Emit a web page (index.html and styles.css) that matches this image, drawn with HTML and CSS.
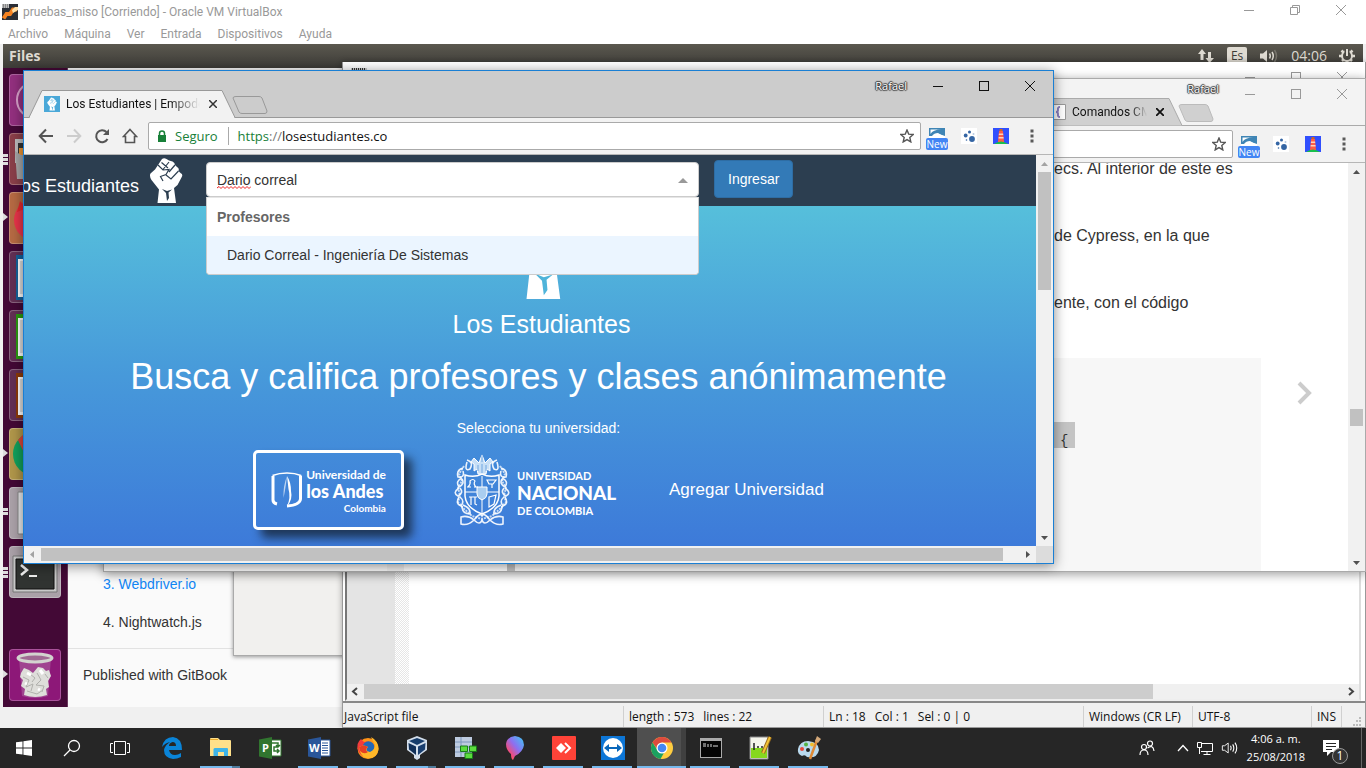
FILE: index.html
```html
<!DOCTYPE html>
<html lang="es">
<head>
<meta charset="utf-8">
<title>pruebas_miso [Corriendo] - Oracle VM VirtualBox</title>
<link rel="stylesheet" href="styles.css">
</head>
<body>
<svg class="defs" aria-hidden="true">
  <symbol id="min" viewBox="0 0 12 12"><path d="M1 6.500H11" stroke="currentColor" fill="none"/></symbol>
  <symbol id="max" viewBox="0 0 12 12"><rect x="1.500" y="1.500" width="9" height="9" stroke="currentColor" fill="none"/></symbol>
  <symbol id="restore" viewBox="0 0 12 12"><path d="M1.500 3.500H8.500V10.500H1.500ZM3.500 3V1.500H10.500V8.500H9" stroke="currentColor" fill="none"/></symbol>
  <symbol id="close" viewBox="0 0 12 12"><path d="M1 1L11 11M11 1L1 11" stroke="currentColor" fill="none"/></symbol>
  <symbol id="back" viewBox="0 0 16 16"><path d="M15 8H2M8 1.500L1.700 8L8 14.500" stroke="currentColor" stroke-width="2" fill="none"/></symbol>
  <symbol id="reload" viewBox="0 0 16 16"><path d="M13.500 11A6 6 0 1 1 12.500 4" stroke="currentColor" stroke-width="2" fill="none"/><path d="M15 1V7H9Z" fill="currentColor"/></symbol>
  <symbol id="home" viewBox="0 0 16 16"><path d="M8 1.500L14.500 8.500H12.500V14.500H3.500V8.500H1.500Z" stroke="currentColor" stroke-width="1.600" fill="none"/></symbol>
  <symbol id="star" viewBox="0 0 14 14"><path d="M7 1L8.700 5.100L13.200 5.500L9.800 8.500L10.800 12.900L7 10.600L3.200 12.900L4.200 8.500L.8 5.500L5.300 5.100Z" stroke="#555" stroke-width="1.400" fill="none"/></symbol>
  <symbol id="dots" viewBox="0 0 4 14"><path d="M.5 .5h3v3h-3zM.5 5.500h3v3h-3zM.5 10.500h3v3h-3z" fill="#5a5a5a"/></symbol>
  <symbol id="ext-draw" viewBox="0 0 16 16"><rect width="16" height="16" fill="#fff"/><path d="M0 0H16V8L13 7Q9 5 5 8H0ZM1.500 1.500V6Q4 1 14 1.500Z" fill="#3f85b5" fill-rule="evenodd"/><path d="M3 8Q5 5 9 5L14 8Z" fill="#fff"/></symbol>
  <symbol id="ext-dots" viewBox="0 0 16 16"><rect width="16" height="16" fill="#fff"/><g fill="#3465a4"><circle cx="8.500" cy="4" r="1.500"/><circle cx="4.700" cy="7.500" r="1.900"/><circle cx="11" cy="11" r="2.900"/><circle cx="5.500" cy="12" r=".8"/></g><circle cx="12.500" cy="6" r="1" fill="#b8cbe2"/></symbol>
  <symbol id="ext-tower" viewBox="0 0 16 16"><rect width="16" height="16" fill="#304ffe"/><path d="M6 3H10L11 14H5Z" fill="#ff5c45"/><path d="M6 5.500H10L10.300 7H5.800ZM5.700 9H10.500L10.700 10.500H5.500Z" fill="#ffd2b8"/><path d="M6.500 1H9.500V3H6.500Z" fill="#c62"/><path d="M1 16Q8 11 15 16Z" fill="#19c04b"/></symbol>
  <symbol id="up" viewBox="0 0 17 17"><path d="M5 11H12L8.500 7Z" fill="currentColor"/></symbol>
  <symbol id="down" viewBox="0 0 17 17"><path d="M5 7H12L8.500 11Z" fill="currentColor"/></symbol>
  <symbol id="left" viewBox="0 0 17 17"><path d="M10 5V12L6 8.500Z" fill="currentColor"/></symbol>
  <symbol id="right" viewBox="0 0 17 17"><path d="M7 5V12L11 8.500Z" fill="currentColor"/></symbol>
  <symbol id="fist" viewBox="0 0 34 45">
    <path d="M8.500 45L10 31.500L2.500 22Q0 18 1.500 15.500L6 11.500L9 7L13 1Q15-.5 17.500 1L20 2.500L23.500 3.500Q26 4.500 26 7L28 9Q30.500 10 29.500 13L31.500 15Q34.500 16.500 32.500 19.500L28.500 27L25 30L27 45Z" fill="#fff"/>
    <path d="M12.500 4.500L19 10M20 4L14 11.500M9 7L14 12L20 11.500L17 16.500L11.500 18.500L14 23M26 7L20 14M29.500 13L22 21L17 17" fill="none" stroke="var(--ink)" stroke-width="1.200"/>
    <path d="M13 31L18 33L23 31.500L19.500 34.500L20 40L18 43L17 35Z" fill="var(--ink)"/>
  </symbol>
  <symbol id="speaker" viewBox="0 0 20 14"><path d="M1.500 4.500H4L8 1.500V12.500L4 9.500H1.500Z" fill="none" stroke="currentColor"/><path d="M10.500 4.500Q12 7 10.500 9.500M13 3Q15.500 7 13 11M15.500 1Q19.500 7 15.500 13" stroke="currentColor" fill="none" stroke-width="1.200"/></symbol>
  <symbol id="doc" viewBox="0 0 52 52"><path d="M7 4H46V49H7Z" fill="currentColor"/><path d="M9 8H44V46H9Z" fill="#fff"/><path d="M11 10H42V43H11Z" fill="#ddd"/></symbol>
</svg>

<main class="desktop">
  <section class="vm" aria-label="Máquina virtual">
    <header class="vm-title">
      <svg class="i16" viewBox="0 0 16 16"><rect width="16" height="16" fill="#2b2e35"/><path d="M1.500 14.500L4.500 10H8L11 5.500H15" fill="none" stroke="#f58220" stroke-width="4"/><path d="M10 6L13 3H16V6L11 9Z" fill="#ffe0a8"/><path d="M0 0H7V4H0Z" fill="#bbb"/><path d="M1 1H6M1 3H6" stroke="#555" stroke-dasharray="1 1"/></svg>
      <span>pruebas_miso [Corriendo] - Oracle VM VirtualBox</span>
      <div class="controls pale">
        <button aria-label="Minimizar VM"><svg><use href="#min"/></svg></button><button aria-label="Restaurar VM"><svg><use href="#restore"/></svg></button><button aria-label="Cerrar VM"><svg><use href="#close"/></svg></button>
      </div>
    </header>
    <nav class="vm-menu"><button>Archivo</button><button>Máquina</button><button>Ver</button><button>Entrada</button><button>Dispositivos</button><button>Ayuda</button></nav>
    <div class="guest">
      <div class="panel">
        <b>Files</b>
        <div class="indicators">
          <svg width="18" height="16" viewBox="0 0 18 16"><path d="M5 1L9 6H6.500V12H3.500V6H1ZM12.500 15L8.500 10H11V4H14V10H17Z" fill="#dfdbd2"/></svg>
          <span class="lang">Es</span>
          <svg width="20" height="14" viewBox="0 0 20 14"><path d="M1 4.500H4L8 1V13L4 9.500H1Z" fill="#dfdbd2"/><path d="M10.500 4.500Q12 7 10.500 9.500M13 3Q15.500 7 13 11" stroke="#dfdbd2" fill="none" stroke-width="1.500"/><path d="M15.500 1Q19.500 7 15.500 13" stroke="#77746b" fill="none" stroke-width="1.500"/></svg>
          <time>04:06</time>
          <svg width="16" height="16" viewBox="0 0 16 16"><circle cx="8" cy="8" r="5" fill="none" stroke="#dfdbd2" stroke-width="2"/><path d="M0 8H3M13 8H16M2.500 2.500L4.500 4.500M13.500 2.500L11.500 4.500M3 13L4.500 11.500M13 13L11.500 11.500M8 13V15.500" stroke="#dfdbd2" stroke-width="2.500"/><path d="M8 1V8" stroke="#494741" stroke-width="5"/><path d="M8 1V8" stroke="#dfdbd2" stroke-width="2"/></svg>
        </div>
      </div>
      <div class="guest-body">
        <ul class="launcher">
          <li class="l-dash"><svg viewBox="0 0 52 52"><circle cx="26" cy="26" r="18" fill="none" stroke="#d9a3cc" stroke-width="2"/><circle cx="28" cy="23" r="14" fill="#e9cfe2"/></svg></li>
          <li class="l-files"><i class="mark three"></i><svg viewBox="0 0 52 52"><path d="M6 6H46V30H6Z" fill="#bbb"/><path d="M9 10H40V24H9Z" fill="#333"/><path d="M10 15H42V28H10Z" fill="#ea9333"/><path d="M6 18L12 22H47V46H8Z" fill="#a5a5a5"/></svg></li>
          <li class="l-fox"><i class="mark arrow"></i><svg viewBox="0 0 52 52"><circle cx="26" cy="28" r="21" fill="#e8344a"/><path d="M8 20L11 9L18 16Z" fill="#e3272d"/><circle cx="28" cy="27" r="12" fill="#7a2fb5"/></svg></li>
          <li class="l-app blue"><svg><use href="#doc"/></svg></li>
          <li class="l-app green"><svg><use href="#doc"/></svg></li>
          <li class="l-app brown"><svg><use href="#doc"/></svg></li>
          <li class="l-chrome"><i class="mark arrow"></i><svg viewBox="0 0 52 52"><circle cx="26" cy="26" r="22" fill="#12a05c"/><path d="M9 12A22 22 0 0 1 46 14L26 26L16 27Z" fill="#d9453a"/></svg></li>
          <li class="l-text"><i class="mark two"></i><svg viewBox="0 0 52 52"><path d="M9 5H43V47H9Z" fill="#e8eaec" stroke="#888"/></svg></li>
          <li class="l-term"><i class="mark three"></i><svg viewBox="0 0 52 52"><path d="M4 10H48V46H4Z" fill="#c8c8c8" stroke="#777"/><path d="M7 13H45V43H7Z" fill="#303331" stroke="#111"/><path d="M12 19L18 24L12 29" stroke="#eee" stroke-width="2.500" fill="none"/><path d="M20 30H28" stroke="#eee" stroke-width="2"/></svg></li>
          <li class="l-trash"><i class="mark arrow"></i><svg viewBox="0 0 52 52"><path d="M10 9H42L39 47Q26 51 13 47Z" fill="#a8559a" opacity=".7"/><path d="M12 24L15 19L20 21L24 24L29 18L34 19L37 22L40 21L42 27L39 32L40 38L37 40L38 46Q26 50 15 46L16 40L12 37L14 31L11 28Z" fill="#dededa"/><path d="M14 28L20 31L17 38L24 35L22 42M28 24L32 31L27 36L35 37L33 43M21 25L26 29L23 33M36 25L39 29M18 42L28 45L34 41" stroke="#b0b0ac" fill="none"/><path d="M18 24L22 26M31 21L34 25M16 34L18 35M29 40L31 41" stroke="#fff" stroke-width="3"/><ellipse cx="26" cy="9" rx="17" ry="4" fill="#a06a93" stroke="#d3d3cf" stroke-width="3"/></svg></li>
        </ul>
        <aside class="book">
          <ol start="3"><li><a href="#webdriver">3. Webdriver.io</a></li><li>4. Nightwatch.js</li></ol>
          <footer>Published with GitBook</footer>
        </aside>
      </div>
    </div>
  </section>

  <section class="dialog" aria-label="Diálogo"></section>

  <section class="npp" aria-label="Editor">
    <header class="npp-title">
      <svg width="16" height="12" viewBox="0 0 16 12"><path d="M0 1H16V12H0Z" fill="#ccc"/><path d="M1 2H14" stroke="#333" stroke-dasharray="1 1" stroke-width="2"/></svg>
      <div class="controls pale"><button aria-label="Minimizar editor"><svg><use href="#min"/></svg></button><button aria-label="Maximizar editor"><svg><use href="#max"/></svg></button><button aria-label="Cerrar editor"><svg><use href="#close"/></svg></button></div>
    </header>
    <div class="editor">
      <div class="editor-body"><div class="gutter"></div><div class="fold"></div></div>
      <div class="editor-scroll"><svg viewBox="0 0 17 15"><path d="M10 4L6 7.500L10 11" fill="none" stroke="#444" stroke-width="2"/></svg><div class="thumb"></div><svg viewBox="0 0 17 15"><path d="M7 4L11 7.500L7 11" fill="none" stroke="#444" stroke-width="2"/></svg></div>
    </div>
    <footer class="status">
      <span class="s-type">JavaScript file</span><span class="s-len"><span>length : 573</span><span>lines : 22</span></span><span class="s-pos"><span>Ln : 18</span><span>Col : 1</span><span>Sel : 0 | 0</span></span><span class="s-eol">Windows (CR LF)</span><span class="s-enc">UTF-8</span><span class="s-ins">INS</span>
      <span class="s-grip"><svg width="10" height="10" viewBox="0 0 10 10"><path d="M7 0h2v2h-2zM4 3h2v2h-2zM7 3h2v2h-2zM1 7h2v2h-2zM4 7h2v2h-2zM7 7h2v2h-2z" fill="#bbb"/></svg></span>
    </footer>
  </section>

  <section class="chrome behind" aria-label="Comandos">
    <header class="tabs">
      <div class="controls pale"><span class="user">Rafael</span><button aria-label="Minimizar"><svg><use href="#min"/></svg></button><button aria-label="Maximizar"><svg><use href="#max"/></svg></button><button aria-label="Cerrar"><svg><use href="#close"/></svg></button></div>
      <div class="tab">
        <svg class="tab-shape" viewBox="0 0 212 28"><path d="M0 27.500H5L18 .5H198L211 27.500" fill="#d0d0d0" stroke="#aaa"/></svg>
        <svg class="i16" viewBox="0 0 16 16"><path d="M.5 .5H15.500V15.500H.5Z" fill="#fff" stroke="#999"/><path d="M10 3Q7.500 3 8 6Q8 8 6 8Q8 8 8 10Q7.500 13 10 13" fill="none" stroke="#8b7fc0" stroke-width="2"/></svg>
        <span class="tab-name">Comandos CMD</span>
        <button class="tab-x" aria-label="Cerrar pestaña"><svg viewBox="0 0 8 8"><path d="M0 0L8 8M8 0L0 8" stroke="#111" stroke-width="1.800"/></svg></button>
      </div>
      <button class="newtab" aria-label="Nueva pestaña"><svg viewBox="0 0 36 18"><path d="M4 .5H27Q29 .5 30 2L35 15Q35 17.500 33 17.500H10Q8 17.500 7 16L1 2Q1 .5 4 .5Z" fill="#d0d0d0" stroke="#bbb"/></svg></button>
    </header>
    <div class="toolbar">
      <div class="omni"><input type="text" aria-label="Dirección"><button aria-label="Favorito"><svg width="14" height="14"><use href="#star"/></svg></button></div>
      <div class="exts"><button aria-label="Extensión 1"><svg class="i16"><use href="#ext-draw"/></svg><em>New</em></button><button aria-label="Extensión 2"><svg class="i16"><use href="#ext-dots"/></svg></button><button aria-label="Extensión 3"><svg class="i16"><use href="#ext-tower"/></svg></button><button aria-label="Menú"><svg width="4" height="14"><use href="#dots"/></svg></button></div>
    </div>
    <div class="page">
      <div class="doc-side"></div>
      <article class="doc">
        <p>ecs. Al interior de este es</p><p>de Cypress, en la que</p><p>ente, con el código</p>
        <pre><code>{</code></pre>
      </article>
      <a class="next" href="#siguiente" aria-label="Siguiente"><svg width="16" height="24" viewBox="0 0 16 24"><path d="M2 2L12 12L2 22" fill="none" stroke="#ccc" stroke-width="4"/></svg></a>
      <div class="vbar"><svg><use href="#up"/></svg><div class="space-a"></div><div class="thumb small"></div><div class="space-b"></div><svg><use href="#down"/></svg></div>
    </div>
  </section>

  <section class="chrome front" aria-label="Los Estudiantes">
    <header class="tabs">
      <div class="controls"><span class="user">Rafael</span><button aria-label="Minimizar"><svg><use href="#min"/></svg></button><button aria-label="Maximizar"><svg><use href="#max"/></svg></button><button aria-label="Cerrar"><svg><use href="#close"/></svg></button></div>
      <div class="tab">
        <svg class="tab-shape" viewBox="0 0 212 28"><path d="M0 27.500H5L18 .5H198L211 27.500" fill="#f2f2f2" stroke="#999"/><path d="M6 27.500H210" stroke="#f2f2f2"/></svg>
        <svg class="i16 fav" viewBox="0 0 16 16"><rect width="16" height="16" fill="#4aa8d8"/><use href="#fist" x="3" y="1" width="10" height="14"/></svg>
        <span class="tab-name">Los Estudiantes | Empoderando</span>
        <button class="tab-x" aria-label="Cerrar pestaña"><svg viewBox="0 0 8 8"><path d="M0 0L8 8M8 0L0 8" stroke="#333" stroke-width="1.500"/></svg></button>
      </div>
      <button class="newtab" aria-label="Nueva pestaña"><svg viewBox="0 0 36 18"><path d="M4 .5H27Q29 .5 30 2L35 15Q35 17.500 33 17.500H10Q8 17.500 7 16L1 2Q1 .5 4 .5Z" fill="#ccc" stroke="#999"/></svg></button>
    </header>
    <div class="toolbar">
      <div class="nav-btns"><button aria-label="Atrás"><svg class="i16"><use href="#back"/></svg></button><button aria-label="Adelante" class="off"><svg class="i16 flip"><use href="#back"/></svg></button><button aria-label="Recargar"><svg class="i16"><use href="#reload"/></svg></button><button aria-label="Inicio"><svg class="i16"><use href="#home"/></svg></button></div>
      <div class="omni">
        <svg width="10" height="12" viewBox="0 0 10 12"><path d="M1 5H9V12H1Z" fill="#188038"/><path d="M2.500 6V3.500Q2.500 1 5 1Q7.500 1 7.500 3.500V6" fill="none" stroke="#188038" stroke-width="1.500"/></svg>
        <span class="secure">Seguro</span>
        <label for="url"><span>https</span>://</label><input id="url" type="text" value="losestudiantes.co">
        <button aria-label="Favorito"><svg width="14" height="14"><use href="#star"/></svg></button>
      </div>
      <div class="exts"><button aria-label="Extensión 1"><svg class="i16"><use href="#ext-draw"/></svg><em>New</em></button><button aria-label="Extensión 2"><svg class="i16"><use href="#ext-dots"/></svg></button><button aria-label="Extensión 3"><svg class="i16"><use href="#ext-tower"/></svg></button><button aria-label="Menú"><svg width="4" height="14"><use href="#dots"/></svg></button></div>
    </div>
    <div class="page">
      <div class="site">
        <nav class="site-nav">
          <a class="brand" href="#inicio"><span>Los Estudiantes</span></a>
          <svg class="nav-fist"><use href="#fist"/></svg>
          <div class="search">
            <input type="text" aria-label="Buscar profesor" value="Dario correal" spellcheck="false">
            <svg class="squiggle" viewBox="0 0 34 3"><path d="M0 2L2 .5L4 2.500L6 .5L8 2.500L10 .5L12 2.500L14 .5L16 2.500L18 .5L20 2.500L22 .5L24 2.500L26 .5L28 2.500L30 .5L32 2.500L34 .5" fill="none" stroke="#e22"/></svg>
            <i class="caret"></i>
            <div class="results"><h4>Profesores</h4><a href="#dario">Dario Correal - Ingeniería De Sistemas</a></div>
          </div>
          <button class="login">Ingresar</button>
        </nav>
        <div class="hero">
          <div class="hero-brand"><svg><use href="#fist"/></svg><span>Los Estudiantes</span></div>
          <h1>Busca y califica profesores y clases anónimamente</h1>
          <p>Selecciona tu universidad:</p>
          <div class="unis">
            <button class="andes">
              <svg width="32" height="36" viewBox="0 0 32 36"><path d="M6 32Q2 31 2 28V4" fill="none" stroke="#fff" stroke-width="3"/><path d="M1.500 3.500Q8 1 16 1Q24 1 30 3.500" fill="none" stroke="#fff" stroke-width="1.500"/><path d="M29.500 3.500V27Q29 33 16 34" fill="none" stroke="#fff" stroke-width="3"/><path d="M16 34Q22 28 20 19Q20 10 16 4L17.500 17Q20 26 16 34Z" fill="#fff"/><path d="M16 4Q12 14 12.500 26Q14.500 17 16 4Z" fill="#fff" opacity=".65"/></svg>
              <span class="andes-name"><span>Universidad de</span><b>los Andes</b><small>Colombia</small></span>
            </button>
            <button class="nacional">
              <svg width="56" height="72" viewBox="0 0 56 72" fill="none" stroke="#fff"><path d="M11 21Q20 24 28 20Q36 24 45 21V42Q44 54 28 60Q12 54 11 42Z" stroke-width="1.500"/><path d="M28 22V59M11 38H45"/><path d="M23 33H33V40Q33 44 28 46Q23 44 23 40Z" fill="#a9cdf0"/><path d="M24 20L23 15L20 17L20 10L17 8L20 4L23 7L25 9L28 1L31 9L33 7L36 4L39 8L36 10V17L33 15L32 20Z" fill="#c7dff6"/><path d="M28 0V8M24 11V17M28 10V19M32 11V17" stroke="#5a98dc" stroke-width=".8"/><path d="M13 6Q20 8 16 15Q10 18 13 8M43 6Q36 8 40 15Q46 18 43 8M9 14Q2 16 4 23Q11 24 9 17M47 14Q54 16 52 23Q45 24 47 17M8 24Q1 27 5 33Q11 30 8 25M48 24Q55 27 51 33Q45 30 48 25M5 34Q-2 39 4 42Q10 39 6 34M51 34Q58 39 52 42Q46 39 50 34M5 43Q1 50 7 52Q11 47 6 43M51 43Q55 50 49 52Q45 47 50 43M8 52Q8 60 16 60Q17 54 9 51M48 52Q48 60 40 60Q39 54 47 51M7 63Q14 61 20 66Q26 58 28 62Q30 58 36 66Q42 61 49 63V70Q42 72 36 66Q30 72 28 66Q26 72 20 66Q14 72 7 70Z" stroke-width="1.600" stroke-opacity=".9"/><path d="M10 12L5 20L8 27L4 34L6 41L4 48L9 54L18 62L28 65L38 62L47 54L52 48L50 41L52 34L48 27L51 20L46 12" stroke-opacity=".7" stroke-width="2" stroke-dasharray="2 1"/><path d="M14 33Q17 30 16 27Q19 24 21 27Q19 30 22 33M13 33H17M20 33H24M33 26H42L39 30H35ZM38 30V34M15 43H23M17 43V51M21 43V50L23 51M35 43L42 41L40 50L35 53Z" stroke-width="1.200"/></svg>
              <span class="nac-name"><span>UNIVERSIDAD</span><b>NACIONAL</b><span>DE COLOMBIA</span></span>
            </button>
            <a class="add" href="#agregar">Agregar Universidad</a>
          </div>
        </div>
      </div>
      <div class="vbar"><svg class="dim"><use href="#up"/></svg><div class="thumb tall"></div><div class="rest"></div><svg><use href="#down"/></svg></div>
    </div>
    <div class="hbar"><svg class="dim"><use href="#left"/></svg><div class="thumb"></div><div class="rest"></div><svg><use href="#right"/></svg><i></i></div>
  </section>
</main>

<footer class="taskbar">
  <div class="sys">
    <button aria-label="Inicio"><svg width="16" height="16" viewBox="0 0 16 16"><path d="M0 2.300L6.500 1.400V7.600H0ZM7.400 1.200L16 0V7.600H7.400ZM0 8.400H6.500V14.600L0 13.700ZM7.400 8.400H16V16L7.400 14.800Z" fill="#fff"/></svg></button>
    <button aria-label="Buscar"><svg width="18" height="18" viewBox="0 0 18 18"><circle cx="11" cy="7" r="5.500" fill="none" stroke="#fff" stroke-width="1.300"/><path d="M7 11L1 17" stroke="#fff" stroke-width="1.300"/></svg></button>
    <button aria-label="Vista de tareas"><svg width="20" height="16" viewBox="0 0 20 16"><path d="M4.500 1.500H15.500V14.500H4.500ZM3 3.500H.5V12.500H3M17 3.500H19.500V12.500H17" fill="none" stroke="#fff"/></svg></button>
  </div>
  <div class="apps">
    <button aria-label="Edge"><svg viewBox="0 0 24 24"><path d="M2 11Q4 1 13 1Q22 2 22 14H9Q10 19 15 19Q18 19 21 17V21Q17 23 13 23Q4 22 4 14Q5 9 10 6Q5 7 2 11ZM9 10H16Q16 6 12.500 6Q9 7 9 10Z" fill="#0a84d8"/></svg></button>
    <button aria-label="Explorador" class="run group"><svg viewBox="0 0 24 24"><path d="M1 3Q1 2 2 2H9L11 4H21Q22 4 22 5V20H1Z" fill="#ffe08a"/><path d="M1 3H9V4H1Z" fill="#e8a92d"/><path d="M4.500 20V13Q5 12 6 12H18Q19 12 19 13V20H15V16H9V20Z" fill="#3fb4e8"/></svg></button>
    <button aria-label="Project"><svg viewBox="0 0 24 24"><path d="M13 4H23V20H13Z" fill="#fff" stroke="#31752f"/><path d="M14 7H20V11H16V15H20M18 9L20 11L22 9M19 13L21 15L19 17" fill="none" stroke="#31752f" stroke-width="1.500"/><path d="M1 3.500L14 1V23L1 20.500Z" fill="#31752f"/><text x="4" y="16" class="glyph">P</text></svg></button>
    <button aria-label="Word" class="run"><svg viewBox="0 0 24 24"><path d="M13 4H23V20H13Z" fill="#fff" stroke="#2a5699"/><path d="M15 7H21M15 9.500H21M15 12H21M15 14.500H21M15 17H21" stroke="#2a5699"/><path d="M1 3.500L14 1V23L1 20.500Z" fill="#2a5699"/><text x="2" y="16" class="glyph">W</text></svg></button>
    <button aria-label="Firefox" class="run"><svg viewBox="0 0 24 24"><circle cx="12" cy="12.500" r="10.500" fill="#ff9418"/><path d="M2 14Q0 7 5 3L8 6Q13 4 17 9L12 20Q5 22 2 14Z" fill="#f23c3c"/><circle cx="12.500" cy="11" r="5.800" fill="#2468b8"/><path d="M3 11Q8 8 12 11Q8 15 14 16Q19 14 19 9L15 1Q23 5 22.500 14Q20 24 10 22Q4 20 3 11Z" fill="#ffb728"/><path d="M3 11Q8 8 12 11Q8 14 12 16Q8 19 4 15Z" fill="#e53f24"/></svg></button>
    <button aria-label="VirtualBox" class="run group"><svg viewBox="0 0 24 24"><path d="M12 0L22 4V14L15 19V22L12 24L9 22V19L2 14V4Z" fill="#d3deeb"/><path d="M4 5L12 2L20 5L12 9Z" fill="#153c6b"/><path d="M3.500 7L11 10.500V19L4 13.500Z" fill="#102f58"/><path d="M20.500 7L13 10.500V19L20 13.500Z" fill="#193f70"/></svg></button>
    <button aria-label="Redes" class="run"><svg viewBox="0 0 24 24"><path d="M1 1H18V21H1Z" fill="#bdcbe0"/><path d="M1 6H18M1 11H18M1 16H18M7 1V21" stroke="#7d97bb"/><path d="M6.500 10H13.500V15.500H6.500ZM15.500 10H22.500V15.500H15.500ZM11 17H18.500V22.500H11Z" fill="#5bdc3e" stroke="#187b18"/></svg></button>
    <button aria-label="Paint 3D" class="run"><svg viewBox="0 0 24 24"><defs><linearGradient id="pin" x1="1" y1="0" x2="0" y2="1"><stop stop-color="#37cdf4"/><stop offset=".45" stop-color="#8d6ff0"/><stop offset=".75" stop-color="#f34b78"/><stop offset="1" stop-color="#ffa21a"/></linearGradient></defs><path d="M12 0Q21 1 21 9Q20 16 12 20L10 24Q8 23 8 18Q3 14 3 8Q4 1 12 0Z" fill="url(#pin)"/></svg></button>
    <button aria-label="AnyDesk" class="run"><svg viewBox="0 0 24 24"><rect width="24" height="24" rx="1" fill="#ff4338"/><path d="M4 12L9 7L14 12L9 17Z" fill="#fff"/><path d="M13 7L18 12L13 17" fill="none" stroke="#fff" stroke-width="2"/></svg></button>
    <button aria-label="TeamViewer" class="run"><svg viewBox="0 0 24 24"><rect width="24" height="24" fill="#0d76d6"/><circle cx="12" cy="12" r="10" fill="#fff"/><path d="M3 12L8 8V11H16V8L21 12L16 16V13H8V16Z" fill="#0866ba"/></svg></button>
    <button aria-label="Chrome" class="run active"><svg viewBox="0 0 24 24"><circle cx="12" cy="12" r="11" fill="#ffcd40"/><path d="M2.500 6.500A11 11 0 0 1 21.500 6.500H12L8 14Z" fill="#dd4b3e"/><path d="M2.500 6.500L8 15H15L10.500 23A11 11 0 0 1 2.500 6.500Z" fill="#1ba160"/><circle cx="12" cy="12" r="5.500" fill="#fff"/><circle cx="12" cy="12" r="4.300" fill="#4587f4"/></svg></button>
    <button aria-label="Símbolo del sistema" class="run"><svg viewBox="0 0 24 24"><path d="M1 2H23V22H1Z" fill="#aaa"/><path d="M2 5H22V21H2Z" fill="#050505"/><path d="M4 8H7M4 10H7M9 8V11M12 8V11M14 10H19" stroke="#ddd"/></svg></button>
    <button aria-label="Notepad++" class="run"><svg viewBox="0 0 24 24"><path d="M2 1H20V23H2Z" fill="#f5f5ec" stroke="#888"/><path d="M3 12H19V22H3Z" fill="#86d81f"/><path d="M6 7V14M9 11H11M13 11H15" stroke="#222" stroke-width="1.500"/><path d="M22 1L15 17" stroke="#9a6b1e" stroke-width="4"/><path d="M22 1L15 17" stroke="#f2c335" stroke-width="2"/></svg></button>
    <button aria-label="Paint" class="run"><svg viewBox="0 0 24 24"><path d="M11 5Q22 6 22 14Q20 23 10 21Q8 18 5 20Q0 18 1 13Q3 5 11 5Z" fill="#b9d9ed"/><circle cx="5" cy="13" r="2" fill="#e9483a"/><circle cx="9" cy="8.500" r="2" fill="#54b445"/><circle cx="15" cy="8.500" r="2" fill="#f2bd2c"/><circle cx="11" cy="14" r="2" fill="#222"/><path d="M20 4L13 23" stroke="#df8a36" stroke-width="2.500"/><path d="M18 5L20 0L24 3L21 7Z" fill="#d3a87a"/></svg></button>
  </div>
  <div class="tray">
    <button aria-label="Contactos"><svg width="16" height="16" viewBox="0 0 16 16" fill="none" stroke="#fff" stroke-width="1.200"><circle cx="5" cy="7" r="2.500"/><path d="M1 15Q1 10 5 10Q9 10 9 15"/><circle cx="11" cy="3.500" r="2.500"/><path d="M8.500 8Q14 4 15 11"/></svg></button>
    <button class="t-up" aria-label="Mostrar iconos ocultos"><svg width="12" height="8" viewBox="0 0 12 8"><path d="M1 7L6 1.500L11 7" fill="none" stroke="#fff" stroke-width="1.300"/></svg></button>
    <button aria-label="Red"><svg width="16" height="14" viewBox="0 0 16 14"><path d="M4.500 2.500H15.500V10.500H4M10 11V13M6.500 13.500H13.500M.5 1.500H4.500V6.500H.5ZM2.500 7V13" fill="none" stroke="#fff"/></svg></button>
    <button aria-label="Volumen"><svg width="18" height="14"><use href="#speaker"/></svg></button>
    <time class="clock"><span>4:06 a. m.</span><span>25/08/2018</span></time>
    <button class="notes" aria-label="Notificaciones"><svg width="16" height="16" viewBox="0 0 16 16"><path d="M0 0H16V12H8L4 16V12H0Z" fill="#fff"/><path d="M3 3.500H13M3 6.500H13M3 9.500H9" stroke="#262626"/></svg><em>1</em></button>
    <button class="peek" aria-label="Mostrar escritorio"></button>
  </div>
</footer>
</body>
</html>
```
FILE: styles.css
```css
* { box-sizing: border-box; }
html, body { height: 100%; }
body { margin: 0; display: flex; flex-direction: column; overflow: hidden; font: 11px/16px "Open Sans", "Noto Sans", sans-serif; color: #111; background: #f0f0f0; }
button { border: 0; padding: 0; margin: 0; background: none; font: inherit; color: inherit; display: flex; align-items: center; justify-content: center; }
input { border: 0; padding: 0; background: none; font: inherit; color: inherit; outline: 0; min-width: 0; flex: 1; }
a { color: inherit; text-decoration: none; }
ul, ol { list-style: none; margin: 0; padding: 0; }
h1, h4, p, pre { margin: 0; }
em { font-style: normal; }
svg { display: block; flex: none; }
.defs { position: absolute; width: 0; height: 0; }
.i16 { width: 16px; height: 16px; }
.desktop { position: relative; flex: 1; overflow: hidden; }

.controls { display: flex; height: 29px; }
.controls button { width: 46px; }
.controls button svg { width: 12px; height: 12px; }
.controls.pale button { color: #999; }
.user { color: #fff; margin: 0 8px 0 0; line-height: 29px; text-shadow: 1px 0 1px #333, -1px 0 1px #333, 0 1px 1px #333, 0 -1px 1px #333; }

/* virtual machine window */
.vm { position: absolute; inset: 0; display: flex; flex-direction: column; background: #fff; }
.vm-title { display: flex; align-items: center; height: 24px; padding: 0 2px 0 2px; gap: 5px; color: #999; font: 12px/16px Roboto, sans-serif; }
.vm-title .controls { margin-left: auto; height: 20px; align-self: flex-start; }
.vm-menu { display: flex; height: 20px; color: #999; font: 12px/16px Roboto, sans-serif; }
.vm-menu button { padding: 0 8px; }
.guest { flex: 1; display: flex; flex-direction: column; padding: 0 3px 21px; background: #f0f0f0; }
.panel { height: 24px; display: flex; align-items: center; justify-content: space-between; padding: 0 8px 0 6px; background: linear-gradient(#5b584f, #3c3b37); color: #dfdbd2; font-size: 14px; }
.indicators { display: flex; align-items: center; gap: 12px; }
.lang { background: #dfdbd2; color: #3c3b37; border-radius: 2px; padding: 0 4px; font-size: 12px; line-height: 18px; }
.guest-body { flex: 1; display: flex; background: #fafafa; }
.launcher { width: 65px; padding: 6px; background: #430936; border-right: 1px solid #6b3a5e; display: flex; flex-direction: column; gap: 7px; }
.launcher li { position: relative; width: 52px; height: 52px; border-radius: 4px; background: #623054; box-shadow: inset 0 0 0 1px #ffffff40; }
.launcher svg { width: 52px; height: 52px; }
.launcher .l-dash { background: #93307f; }
.launcher .l-files { background: #8a3f49; }
.launcher .l-fox { background: #b66a43; }
.launcher .l-chrome { background: #b0964a; }
.launcher .l-text, .launcher .l-term { background: #aaa1a8; }
.launcher .l-trash { background: #8d1878; margin-top: auto; }
.blue { color: #14629a; }
.green { color: #2a9a10; }
.brown { color: #8c3a08; }
.mark { position: absolute; left: -6px; top: 21px; width: 5px; height: 12px; }
.mark.three { background: repeating-linear-gradient(#ddd 0 3px, transparent 3px 4px); }
.mark.two { height: 7px; background: repeating-linear-gradient(#ddd 0 3px, transparent 3px 4px); }
.mark.arrow { width: 0; height: 0; border: 4px solid transparent; border-left: 5px solid #ddd; border-right: 0; }
.book { flex: 1; display: flex; flex-direction: column; justify-content: flex-end; font: 14px/38px "Liberation Sans", sans-serif; color: #333; }
.book li { padding-left: 35px; }
.book a { color: #1186f5; }
.book footer { margin-top: 7px; padding: 7px 15px 13px; border-top: 1px solid #e2e2e2; }

.dialog { position: absolute; left: 233px; top: 400px; bottom: 72px; width: 200px; background: #f1f0ee; border: 1px solid #aaa; box-shadow: 0 1px 4px #0006; }

/* text editor window */
.npp { position: absolute; inset: 62px 0 0 342px; display: flex; flex-direction: column; background: #fff; border: 1px solid #999; border-top: 0; box-shadow: 0 0 6px #0005; }
.npp-title { display: flex; align-items: flex-start; justify-content: space-between; height: 29px; padding: 5px 0 0 8px; }
.npp-title .controls { height: 19px; }
.editor { flex: 1; display: flex; flex-direction: column; margin-left: 2px; margin-right: 4px; border: 2px solid #777; border-top: 0; border-right-color: #ddd; border-bottom-color: #eee; }
.editor-body { flex: 1; display: flex; }
.gutter { width: 48px; background: #e4e4e4; }
.fold { width: 14px; background: repeating-conic-gradient(#e6e6e6 0 25%, #fff 0 50%) 0 0 / 2px 2px; }
.editor-scroll { display: flex; justify-content: space-between; background: #f0f0f0; }
.editor-scroll svg { width: 17px; height: 15px; }
.editor-scroll .thumb { width: 78%; margin-right: auto; background: #cdcdcd; }
.status { display: flex; height: 26px; padding: 3px 0 0; background: #f0f0f0; border-top: 2px solid #888; font-size: 12px; line-height: 22px; }
.status > span { border-right: 1px solid #d0d0d0; padding-left: 5px; display: flex; gap: 9px; white-space: nowrap; }
.status .s-type { flex: 1; padding-left: 1px; }
.s-len { width: 200px; }
.s-pos { width: 260px; }
.s-eol { width: 109px; }
.s-enc { width: 119px; }
.s-ins { width: 30px; }
.status .s-grip { width: 23px; border: 0; align-items: flex-end; padding-left: 10px; }

/* browser windows */
.chrome { position: absolute; display: flex; flex-direction: column; background: #fff; border: 1px solid #aaa; box-shadow: 0 2px 12px #0007; }
.behind { inset: 78px 0 156px 103px; box-shadow: 0 2px 10px #0006; }
.front { inset: 70px 312px 164px 23px; border-color: #1a7fd4; }
.tabs { position: relative; display: flex; align-items: flex-end; height: 47px; background: #ccc; box-shadow: inset 0 -1px #999; }
.tabs .controls { position: absolute; right: 0; top: 0; }
.behind .tabs { background: #f3f3f3; justify-content: flex-end; padding-right: 151px; box-shadow: inset 0 -1px #aaa; }
.behind .user { line-height: 20px; }
.tab { position: relative; width: 208px; height: 28px; display: flex; align-items: center; gap: 6px; padding: 0 0 0 20px; }
.tab-shape { position: absolute; left: 0; top: 0; width: 212px; height: 28px; }
.tab > :not(.tab-shape) { position: relative; }
.behind .tab { padding-left: 79px; }
.fav { --ink: #4aa8d8; }
.tab-name { flex: 1; overflow: hidden; white-space: nowrap; font: 12px/16px Roboto, sans-serif; -webkit-mask: linear-gradient(90deg, #000 78%, transparent); mask: linear-gradient(90deg, #000 78%, transparent); }
.tab-x { width: 8px; height: 8px; margin: 0 15px 0 3px; }
.tab-x svg { width: 8px; height: 8px; }
.newtab { width: 36px; margin-bottom: 4px; }
.newtab svg { width: 36px; height: 18px; }
.behind .newtab { margin-left: -1px; }
.toolbar { display: flex; align-items: center; height: 37px; padding-right: 19px; background: #f2f2f2; border-bottom: 1px solid #b6b6b6; }
.nav-btns { display: flex; gap: 12px; padding: 0 10px 0 14px; color: #555; }
.off { color: #ccc; }
.flip { transform: scaleX(-1); }
.omni { flex: 1; display: flex; align-items: center; height: 28px; padding: 0 6px 0 8px; background: #fff; border: 1px solid #aaa; border-radius: 2px; font-size: 13px; line-height: 18px; }
.secure { color: #188038; margin: 0 9px 0 8px; padding-right: 10px; border-right: 1px solid #aaa; }
.omni label { color: #777; }
.omni label span { color: #188038; }
.exts { display: flex; align-items: center; gap: 16px; padding-left: 8px; }
.exts button { position: relative; }
.exts button:last-child { margin-left: 5px; }
.exts em { position: absolute; left: -3px; top: 10px; width: 22px; border-radius: 2px; background: #4285f4; color: #fff; font-size: 10px; line-height: 12px; }
.page { flex: 1; min-height: 0; display: flex; overflow: hidden; }
.vbar { width: 17px; flex: none; display: flex; flex-direction: column; align-items: center; background: #f1f1f1; color: #505050; }
.vbar svg, .hbar svg { width: 17px; height: 17px; }
.vbar .dim, .hbar .dim { color: #a3a3a3; }
.vbar .thumb { width: 13px; background: #c1c1c1; }
.small { height: 17px; }
.space-a { flex: 230; }
.space-b { flex: 128; }
.tall { flex: 118; }
.tall + .rest { flex: 239; }
.hbar { display: flex; align-items: center; background: #f1f1f1; color: #505050; }
.hbar .thumb { flex: 962; height: 13px; background: #c1c1c1; }
.hbar .rest { flex: 16; }
.hbar i { width: 17px; height: 17px; background: #dcdcdc; }

/* documentation page */
.doc-side { width: 300px; background: #fafafa; border-right: 17px solid #f1f1f1; }
.doc { flex: 1; margin-left: 103px; font: 16px/25px "Liberation Sans", sans-serif; color: #333; }
.doc p { width: 207px; margin: -7px 0 49px auto; white-space: nowrap; }
.doc pre { display: flex; justify-content: flex-end; height: 300px; margin-top: -6px; padding-top: 64px; border-left: 8px solid #c1c1c1; background: #f7f7f7; font: 14px/26px "Liberation Mono", monospace; }
.doc code { width: 22px; height: 26px; margin-right: 186px; padding: 6px 0 0 7px; background: #c4c4c4; font: inherit; line-height: 26px; }
.next { width: 87px; display: flex; justify-content: center; padding-top: 218px; }

/* Los Estudiantes page */
.site { flex: 1; min-width: 0; display: flex; flex-direction: column; font-family: "Liberation Sans", sans-serif; }
.site-nav { position: relative; z-index: 1; --ink: #2c3e50; display: flex; align-items: flex-start; height: 51px; background: #2c3e50; color: #fff; }
.brand { display: flex; justify-content: flex-end; width: 115px; height: 51px; overflow: hidden; white-space: nowrap; font-size: 18px; line-height: 62px; }
.nav-fist { width: 34px; height: 45px; margin: 3px 23px 0 10px; }
.search { position: relative; flex: 0 1 493px; margin-top: 7px; background: #fff; border: 1px solid #ccc; border-radius: 4px; color: #333; font-size: 14px; line-height: 20px; }
.search input { display: block; width: 100%; height: 33px; padding: 0 10px; }
.squiggle { position: absolute; left: 10px; top: 23px; width: 34px; height: 3px; }
.caret { position: absolute; right: 10px; top: 15px; border: 5px solid transparent; border-top: 0; border-bottom-color: #999; }
.results { position: absolute; left: -1px; right: -1px; top: 34px; border: 1px solid #ccc; border-top-color: #e6e6e6; border-radius: 0 0 4px 4px; background: #fff; }
.results h4 { padding: 9px 10px; color: #666; font-size: 14px; }
.results a { display: block; padding: 9px 20px; background: #ebf5ff; border-radius: 0 0 4px 4px; }
.login { margin: 5px 0 0 15px; padding: 0 13px; height: 38px; border: 1px solid #2e6da4; border-radius: 4px; background: #337ab7; font-size: 14px; }
.hero { --ink: #4fb4da; flex: 1; display: flex; flex-direction: column; align-items: center; padding: 11px 0 0 17px; background: linear-gradient(#56bfdb, #4799da 50%, #3d7ad9); color: #fff; font-size: 14px; line-height: 20px; }
.hero-brand { display: flex; flex-direction: column; align-items: center; padding-left: 6px; font-size: 25px; line-height: 36px; gap: 7px; }
.hero-brand svg { width: 62px; height: 82px; }
.hero h1 { margin: 11px 0 17px; font-size: 36px; line-height: 48px; font-weight: 400; white-space: nowrap; }
.unis { display: flex; align-items: center; gap: 50px; margin-top: 12px; }
.andes { width: 151px; height: 80px; gap: 3px; border: 3px solid #fff; border-radius: 5px; box-shadow: 8px 8px 10px #16253acc; text-align: left; font-family: Lato, sans-serif; }
.andes-name { display: flex; flex-direction: column; font-size: 12px; line-height: 14px; font-weight: 700; padding-top: 3px; }
.andes-name b { font-size: 18px; line-height: 18px; }
.andes-name small { font-size: 10px; line-height: 16px; text-align: right; }
.nacional { gap: 7px; font-family: Lato, sans-serif; text-align: left; }
.nac-name { display: flex; flex-direction: column; font-size: 11px; line-height: 13px; font-weight: 700; width: 102px; padding-top: 6px; }
.nac-name b { font-size: 19px; line-height: 22px; }
.add { font-size: 17px; }

/* host taskbar */
.taskbar { height: 40px; display: flex; background: #262626; color: #fff; }
.sys, .apps, .tray { display: flex; }
.sys button { width: 48px; }
.apps { padding-left: 3px; }
.apps button { position: relative; width: 49px; }
.apps svg { width: 24px; height: 24px; }
.run::after { content: ""; position: absolute; left: 4px; right: 5px; bottom: 0; height: 2px; background: #76b9ed; }
.group::after { background: linear-gradient(90deg, #76b9ed 80%, #4e7b9c 80%); }
.active { background: linear-gradient(90deg, #4f4f4f 90%, #404040 90%); }
.active::after { left: 0; right: 0; }
.glyph { font: 700 11px "Open Sans", sans-serif; fill: #fff; }
.tray { margin-left: auto; align-items: stretch; gap: 8px; }
.t-up { margin-left: 14px; }
.notes { position: relative; width: 26px; margin-left: 8px; }
.notes svg { margin-right: 6px; }
.notes em { position: absolute; right: -1px; bottom: 4px; width: 16px; height: 16px; border: 1px solid #999; border-radius: 50%; background: #333; font-size: 12px; line-height: 14px; }
.clock { display: flex; flex-direction: column; justify-content: center; align-items: center; line-height: 18px; }
.peek { width: 5px; margin-left: 6px; border-left: 1px solid #666; }
```
